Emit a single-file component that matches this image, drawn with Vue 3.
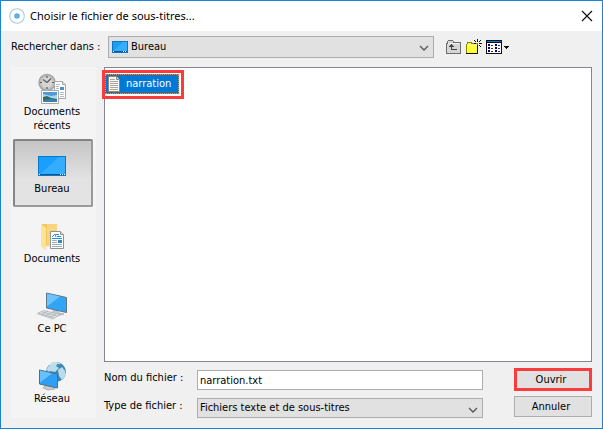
<template>
  <div class="dialog" role="dialog" aria-labelledby="dlg-title">
    <header class="titlebar">
      <svg class="app-icon" width="16" height="16" viewBox="0 0 16 16" aria-hidden="true">
        <circle cx="8" cy="8" r="7.3" fill="#fff" stroke="#a3cde4" stroke-width="1.1" />
        <circle cx="8" cy="8" r="2.8" fill="#5fafdf" />
      </svg>
      <h1 id="dlg-title" class="title">Choisir le fichier de sous-titres...</h1>
      <button class="close" type="button" aria-label="Fermer">
        <svg width="12" height="12" viewBox="0 0 12 12">
          <path d="M1 1l10 10M11 1L1 11" stroke="#111" stroke-width="1.2" fill="none" />
        </svg>
      </button>
    </header>

    <div class="toolbar">
      <label class="look-label" for="look-in">Rechercher dans :</label>
      <div class="combo look">
        <svg class="combo-icon" width="16" height="12" viewBox="0 0 16 12" aria-hidden="true">
          <rect x=".5" y=".5" width="15" height="11" fill="#1b9cf5" stroke="#0a78c2" />
          <path d="M1 10L11 1h4v9z" fill="#36adff" />
          <path d="M1 10.5h14" stroke="#07588f" />
          <path d="M1 10.5h1M11 10.5h1M13 10.5h1" stroke="#fff" />
        </svg>
        <select id="look-in" v-model="folder">
          <option v-for="p in places" :key="p.id" :value="p.id">{{ p.label }}</option>
        </select>
        <svg class="chevron" width="10" height="6" viewBox="0 0 10 6" aria-hidden="true">
          <path d="M1 1l4 4 4-4" fill="none" stroke="#555" stroke-width="1.3" />
        </svg>
      </div>
      <div class="tools">
        <button type="button" class="tool" aria-label="Dossier parent" disabled>
          <svg width="16" height="16" viewBox="0 0 16 16" shape-rendering="crispEdges">
            <path d="M.5 14.500v-10h1v-2l1-1h4l1 1v1h7v11z" fill="#d6d6d6" stroke="#6d6d6d" />
            <path d="M2 4.500h12" stroke="#f0f0f0" />
            <path d="M5.500 6v5M5 10.500h6" stroke="#444" fill="none" />
            <path d="M5 5h1v1h1v1h1v1H3V7h1V6h1z" fill="#444" />
          </svg>
        </button>
        <button type="button" class="tool" aria-label="Nouveau dossier">
          <svg width="16" height="16" viewBox="0 0 16 16" shape-rendering="crispEdges">
            <path d="M.5 14.500v-9l1-1v-1h4v1h6v10z" fill="#ff3" stroke="#8a8500" />
            <path d="M1 6.500h10" stroke="#fffbb0" />
            <path d="M0 14.500h12M11.500 7v8" stroke="#111" />
            <path d="M11 0h1v3h-1zM11 6h1v2h-1zM8 4h2v1H8zM13 4h3v1h-3zM8 1h1v1H8zM9 2h1v1H9zM14 1h1v1h-1zM13 2h1v1h-1zM13 6h1v1h-1zM14 7h1v1h-1z" fill="#111" />
          </svg>
        </button>
        <button type="button" class="tool" aria-label="Affichage">
          <svg width="24" height="16" viewBox="0 0 24 16" shape-rendering="crispEdges">
            <path d="M.5 1.500h15v13H.5z" fill="#fff" stroke="#111" />
            <path d="M1 2h14v1H1z" fill="#0078d7" />
            <path d="M1 3.500h14" stroke="#111" />
            <path d="M2 5h2v2H2zM2 8h2v2H2zM2 11h2v2H2zM9 5h2v2H9zM9 8h2v2H9zM9 11h2v2H9z" fill="#000080" />
            <path d="M5 6h2v1H5zM5 9h2v1H5zM5 12h2v1H5zM12 6h2v1h-2zM12 9h2v1h-2zM12 12h2v1h-2z" fill="#333" />
            <path d="M18 7h5v1h-1v1h-1v1h-1V9h-1V8h-1z" fill="#111" />
          </svg>
        </button>
      </div>
    </div>

    <div class="main">
      <nav class="places" aria-label="Emplacements">
        <button
            v-for="p in places"
            :key="p.id"
            type="button"
            class="place"
            :class="{ active: p.id === folder }"
            @click="folder = p.id"
        >
          <svg v-if="p.id === 'recent'" width="32" height="32" viewBox="0 0 32 32" aria-hidden="true">
            <circle cx="11" cy="9.500" r="8" fill="#c4c4c4" stroke="#a2a2a2" stroke-width="1.400" />
            <circle cx="11" cy="9.500" r="6" fill="#d6d6d6" stroke="#bdbdbd" stroke-width=".8" />
            <path d="M11 9.500l-4-3M11 9.500l4-4M11 3v2M11 14v2M4 9.500h2M16 9.500h2" stroke="#5c5c5c" stroke-width="1.200" />
            <path d="M18.500 8.500h8l3 3v14h-11z" fill="#fdfdfd" stroke="#a8a8a8" />
            <path d="M26.500 8.500v3h3" fill="#ddd" stroke="#a8a8a8" />
            <path d="M20 11.500h4M20 13.500h3M20 15.500h3M24 19.500h4M24 21.500h4M24 23.500h4" stroke="#aebfca" />
            <path d="M24 14h4v3h-4z" fill="#4a93c8" />
            <path d="M5.500 17.500h17v13h-17z" fill="#fff" stroke="#a8a8a8" />
            <path d="M7 19h14v10H7z" fill="#a8d4f1" />
            <path d="M7 19h14v3l-6 1-8-2z" fill="#4d9bd8" />
            <path d="M7 24l4-1 4 2 6 1v3H7z" fill="#2f6d61" />
            <path d="M7 27l7-1 7 1v2H7z" fill="#3e7fb4" />
          </svg>
          <svg v-else-if="p.id === 'desktop'" width="32" height="32" viewBox="0 0 32 32" aria-hidden="true">
            <rect x="2.500" y="6.500" width="27" height="19" fill="#1a9fff" stroke="#0879c6" />
            <path d="M3 25L23 7h6v18z" fill="#35adff" />
            <path d="M3 24.500h26" stroke="#06558c" />
            <path d="M3 24.500h1M24 24.500h1M26 24.500h1M28 24.500h1" stroke="#fff" />
          </svg>
          <svg v-else-if="p.id === 'documents'" width="32" height="32" viewBox="0 0 32 32" aria-hidden="true">
            <path d="M6 4h15v22H10z" fill="#f0c75e" />
            <path d="M11 4h10v22H11z" fill="#f6d681" />
            <path d="M5 4l5 4v23l-5-5z" fill="#ffe394" />
            <path d="M14.500 11.500h10l3 3v14h-13z" fill="#fff" stroke="#929292" />
            <path d="M24.500 11.500v3h3" fill="#ddd" stroke="#929292" />
            <path d="M16 17l3-3 1 3M16 18.500h10M20 14.500h3M21 16.500h4" stroke="#268bd2" fill="none" />
            <path d="M16 20.500h5M16 22.500h5M16 24.500h10M16 26.500h10" stroke="#9cadb8" />
            <path d="M22 20h4v3h-4z" fill="#3c86b5" />
          </svg>
          <svg v-else-if="p.id === 'computer'" width="32" height="32" viewBox="0 0 32 32" aria-hidden="true">
            <path d="M17 21l4-1 2 3 5 1-7 2-5-1z" fill="#c3cbd0" stroke="#8f999e" stroke-width=".6" />
            <path d="M10.500 3l20 4.500v15l-20-4.500z" fill="#32a4f6" stroke="#607785" />
            <path d="M11 3.500l13 3-13 10z" fill="#6bc3ff" />
            <path d="M1 23.500l7-3 16 4-7 4.500z" fill="#e1e4e6" stroke="#a8aeb2" stroke-width=".7" />
            <path d="M3 23.500l15 4M6 22l15 4M5 25l7-4M9 26l7-3.500M13 27.500l7-3.500" stroke="#a8aeb2" stroke-width=".7" />
          </svg>
          <svg v-else width="32" height="32" viewBox="0 0 32 32" aria-hidden="true">
            <circle cx="20" cy="12" r="10" fill="#3b8ab3" />
            <path d="M11 9c2-5 7-7 11-6l-2 3 3 2-4 4-5-1-2 5zM22 10l4-3 3 4 1 4-4 5-3-4z" fill="#b9dded" />
            <path d="M13 5q6-4 11-1" stroke="#e8f6fb" fill="none" />
            <path d="M9 26l6-1 3 2 1 2-7 1-5-2z" fill="#c6ccd0" stroke="#8f999e" stroke-width=".6" />
            <path d="M3.500 10l18 4v14l-18-4z" fill="#2e9ff3" stroke="#536d7b" />
            <path d="M4 10.500l12 3-12 9z" fill="#67c1ff" />
          </svg>
          <span class="place-label">{{ p.label }}</span>
        </button>
      </nav>

      <div class="content">
        <ul class="files" aria-label="Fichiers">
          <li v-for="f in files" :key="f" class="callout">
            <button type="button" class="file" @click="fileName = f + '.txt'">
              <svg width="16" height="18" viewBox="0 0 16 18" aria-hidden="true">
                <path d="M2.500 1.500h8l3 3v12h-11z" fill="#f8f8f3" stroke="#8b887f" />
                <path d="M10.500 1.500v3h3" fill="#d8d8d0" stroke="#8b887f" />
                <path d="M4 4.500h5M4 6.500h8M4 8.500h8M4 10.500h8M4 12.500h8M4 14.500h8" stroke="#a9a69d" />
              </svg>
              <span>{{ f }}</span>
            </button>
          </li>
        </ul>

        <div class="form">
          <div class="fields">
            <label for="file-name">Nom du fichier :</label>
            <input id="file-name" v-model="fileName" type="text" />
            <label for="file-type">Type de fichier :</label>
            <div class="combo">
              <select id="file-type">
                <option>Fichiers texte et de sous-titres</option>
              </select>
              <svg class="chevron" width="10" height="6" viewBox="0 0 10 6" aria-hidden="true">
                <path d="M1 1l4 4 4-4" fill="none" stroke="#555" stroke-width="1.3" />
              </svg>
            </div>
          </div>
          <div class="actions">
            <button type="button" class="btn primary">Ouvrir</button>
            <button type="button" class="btn">Annuler</button>
          </div>
        </div>
      </div>
    </div>
  </div>
</template>

<script setup>
import { ref } from 'vue'

const places = [
  { id: 'recent', label: 'Documents récents' },
  { id: 'desktop', label: 'Bureau' },
  { id: 'documents', label: 'Documents' },
  { id: 'computer', label: 'Ce PC' },
  { id: 'network', label: 'Réseau' },
]
const files = ['narration']

const folder = ref('desktop')
const fileName = ref('narration.txt')
</script>

<style>
body{ background: #f0f0f0; }
</style>

<style scoped>
.dialog, .dialog *{ box-sizing: border-box; }
.dialog{
  display: flex;
  flex-direction: column;
  min-height: 100vh;
  border: 1px solid #1883d7;
  background: #f0f0f0;
  color: #000;
  font-family: Tahoma, "DejaVu Sans Condensed", "Noto Sans", sans-serif;
  font-size: 11px;
  line-height: 14px;
}
button, input, select{
  font: inherit;
  color: inherit;
  margin: 0;
}
.titlebar{
  display: flex;
  align-items: center;
  height: 30px;
  padding: 0 9px 0 8px;
  background: #fff;
}
.title{
  flex: 1;
  margin: 0 0 0 5px;
  font-family: "Segoe UI", "Noto Sans", sans-serif;
  font-size: 11px;
  font-weight: 400;
  line-height: 16px;
}
.close{
  display: flex;
  padding: 0;
  border: 0;
  background: transparent;
}
.toolbar{
  display: flex;
  align-items: center;
  padding: 5px 92px 9px 10px;
}
.look-label{ width: 97px; }
.combo{
  display: flex;
  position: relative;
}
.look{ flex: 1; }
.combo select{
  appearance: none;
  width: 100%;
  height: 20px;
  padding: 0 20px 0 2px;
  border: 1px solid #adadad;
  border-radius: 0;
  background: #e1e1e1;
}
.look select{
  height: 22px;
  padding-left: 22px;
}
.combo-icon{
  position: absolute;
  left: 4px;
  top: 5px;
}
.chevron{
  position: absolute;
  right: 5px;
  top: 9px;
  pointer-events: none;
}
.tools{
  display: flex;
  gap: 4px;
  margin-left: 12px;
}
.tool{
  display: flex;
  padding: 0;
  border: 0;
  background: transparent;
}
.main{
  flex: 1;
  display: flex;
  gap: 8px;
  padding: 0 10px;
}
.places{
  display: flex;
  flex-direction: column;
  align-self: flex-start;
  gap: 2px;
  width: 85px;
  padding: 2px 3px 1px 2px;
  background: #f4f4f4;
}
.place{
  display: flex;
  flex-direction: column;
  align-items: center;
  justify-content: center;
  height: 68px;
  padding: 0 9px 0 7px;
  border: 1px solid transparent;
  background: transparent;
  text-align: center;
}
.place svg{ flex-shrink: 0; }
.place.active{
  border: 2px solid #858585;
  border-right-color: #9a9a9a;
  border-bottom-color: #9a9a9a;
  border-radius: 2px;
  background: linear-gradient(#c5c5c5, #e2e2e2 60%, #e4e4e4);
}
.content{
  flex: 1;
  display: flex;
  flex-direction: column;
  min-width: 0;
}
.files{
  flex: 1;
  display: flex;
  align-items: flex-start;
  margin: 0;
  padding: 0;
  list-style: none;
  border: 1px solid #828790;
  background: #fff;
}
.callout{
  margin: 2px 0 0 -3px;
  border: 3px solid #fb3c3f;
  background: #fff;
}
.file{
  display: flex;
  align-items: center;
  gap: 4px;
  margin: 1px 2px 2px 0;
  padding: 0 7px 0 0;
  border: 1px dotted #f0913a;
  background: #0078d7;
  color: #fff;
}
.form{
  display: flex;
  gap: 31px;
  padding: 6px 0 10px;
}
.fields{
  flex: 1;
  display: grid;
  grid-template-columns: 93px 1fr;
  row-gap: 8px;
  padding-top: 2px;
}
.fields label{ padding-top: 1px; }
.fields input{
  width: 100%;
  height: 20px;
  padding: 0 2px;
  border: 1px solid #abadb3;
  border-radius: 0;
  background: #fff;
}
.actions{
  display: flex;
  flex-direction: column;
  gap: 5px;
  width: 78px;
}
.btn{
  height: 21px;
  padding: 0 4px 0 0;
  border: 1px solid #adadad;
  background: #e1e1e1;
}
.btn.primary{
  height: 23px;
  border: 3px solid #fb3c3f;
}
</style>
